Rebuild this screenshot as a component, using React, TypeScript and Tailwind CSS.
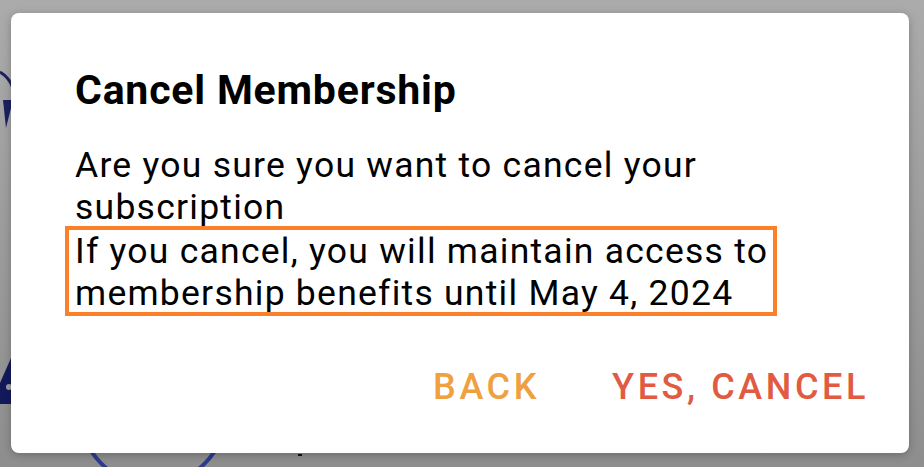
import React from "react";

export default function App() {
  return (
    <div
      className="relative w-[924px] h-[467px] overflow-hidden bg-gradient-to-b from-[#ababab] to-[#8e8e8e]"
      style={{ fontFamily: "Roboto, 'Noto Sans', sans-serif" }}
    >
      {/* background content under the scrim */}
      <svg className="absolute left-0 top-0" width="924" height="467" viewBox="0 0 924 467">
        <path d="M0 72 A 30 30 0 0 1 12 110" fill="none" stroke="#1c2160" strokeWidth="3" />
        <polygon points="3,100 13,100 6,128" fill="#1c2160" />
        <polygon points="0,383 11,358 11,404 0,404" fill="#131a5c" />
        <circle cx="9" cy="387" r="3" fill="#a0a0a0" />
        <circle cx="153" cy="412" r="73" fill="none" stroke="#2f3b8f" strokeWidth="4" />
        <rect x="298" y="454" width="4" height="2" fill="#111" />
      </svg>

      <div className="relative flex pl-[11px] pt-[13px]">
        <div className="w-[898px] h-[440px] rounded-[8px] bg-white shadow-[0_2px_8px_rgba(0,0,0,0.25)] pl-[64px] pt-[53px] flex flex-col">
          <div className="text-[41px] leading-[48px] font-bold tracking-[0.8px] text-black">Cancel Membership</div>
          <div className="mt-[30px] text-[35.5px] leading-[42px] tracking-[1.25px] text-black">
            <div className="w-[720px]">Are you sure you want to cancel your subscription</div>
            <div className="relative mt-[2px]">
              <span className="absolute left-[-10px] top-[-4px] w-[712px] h-[90px] border-[4px] border-[#fc7f2a]" />
              <div className="relative">If you cancel, you will maintain access to</div>
              <div className="relative">membership benefits until May 4, 2024</div>
            </div>
          </div>
          <div className="mt-[51px] flex justify-end pr-[40px] gap-[72px] text-[36px] leading-[44px] font-medium tracking-[3.6px]">
            <span className="text-[#efa03f]">BACK</span>
            <span className="text-[#e15b42]">YES, CANCEL</span>
          </div>
        </div>
      </div>
    </div>
  );
}
